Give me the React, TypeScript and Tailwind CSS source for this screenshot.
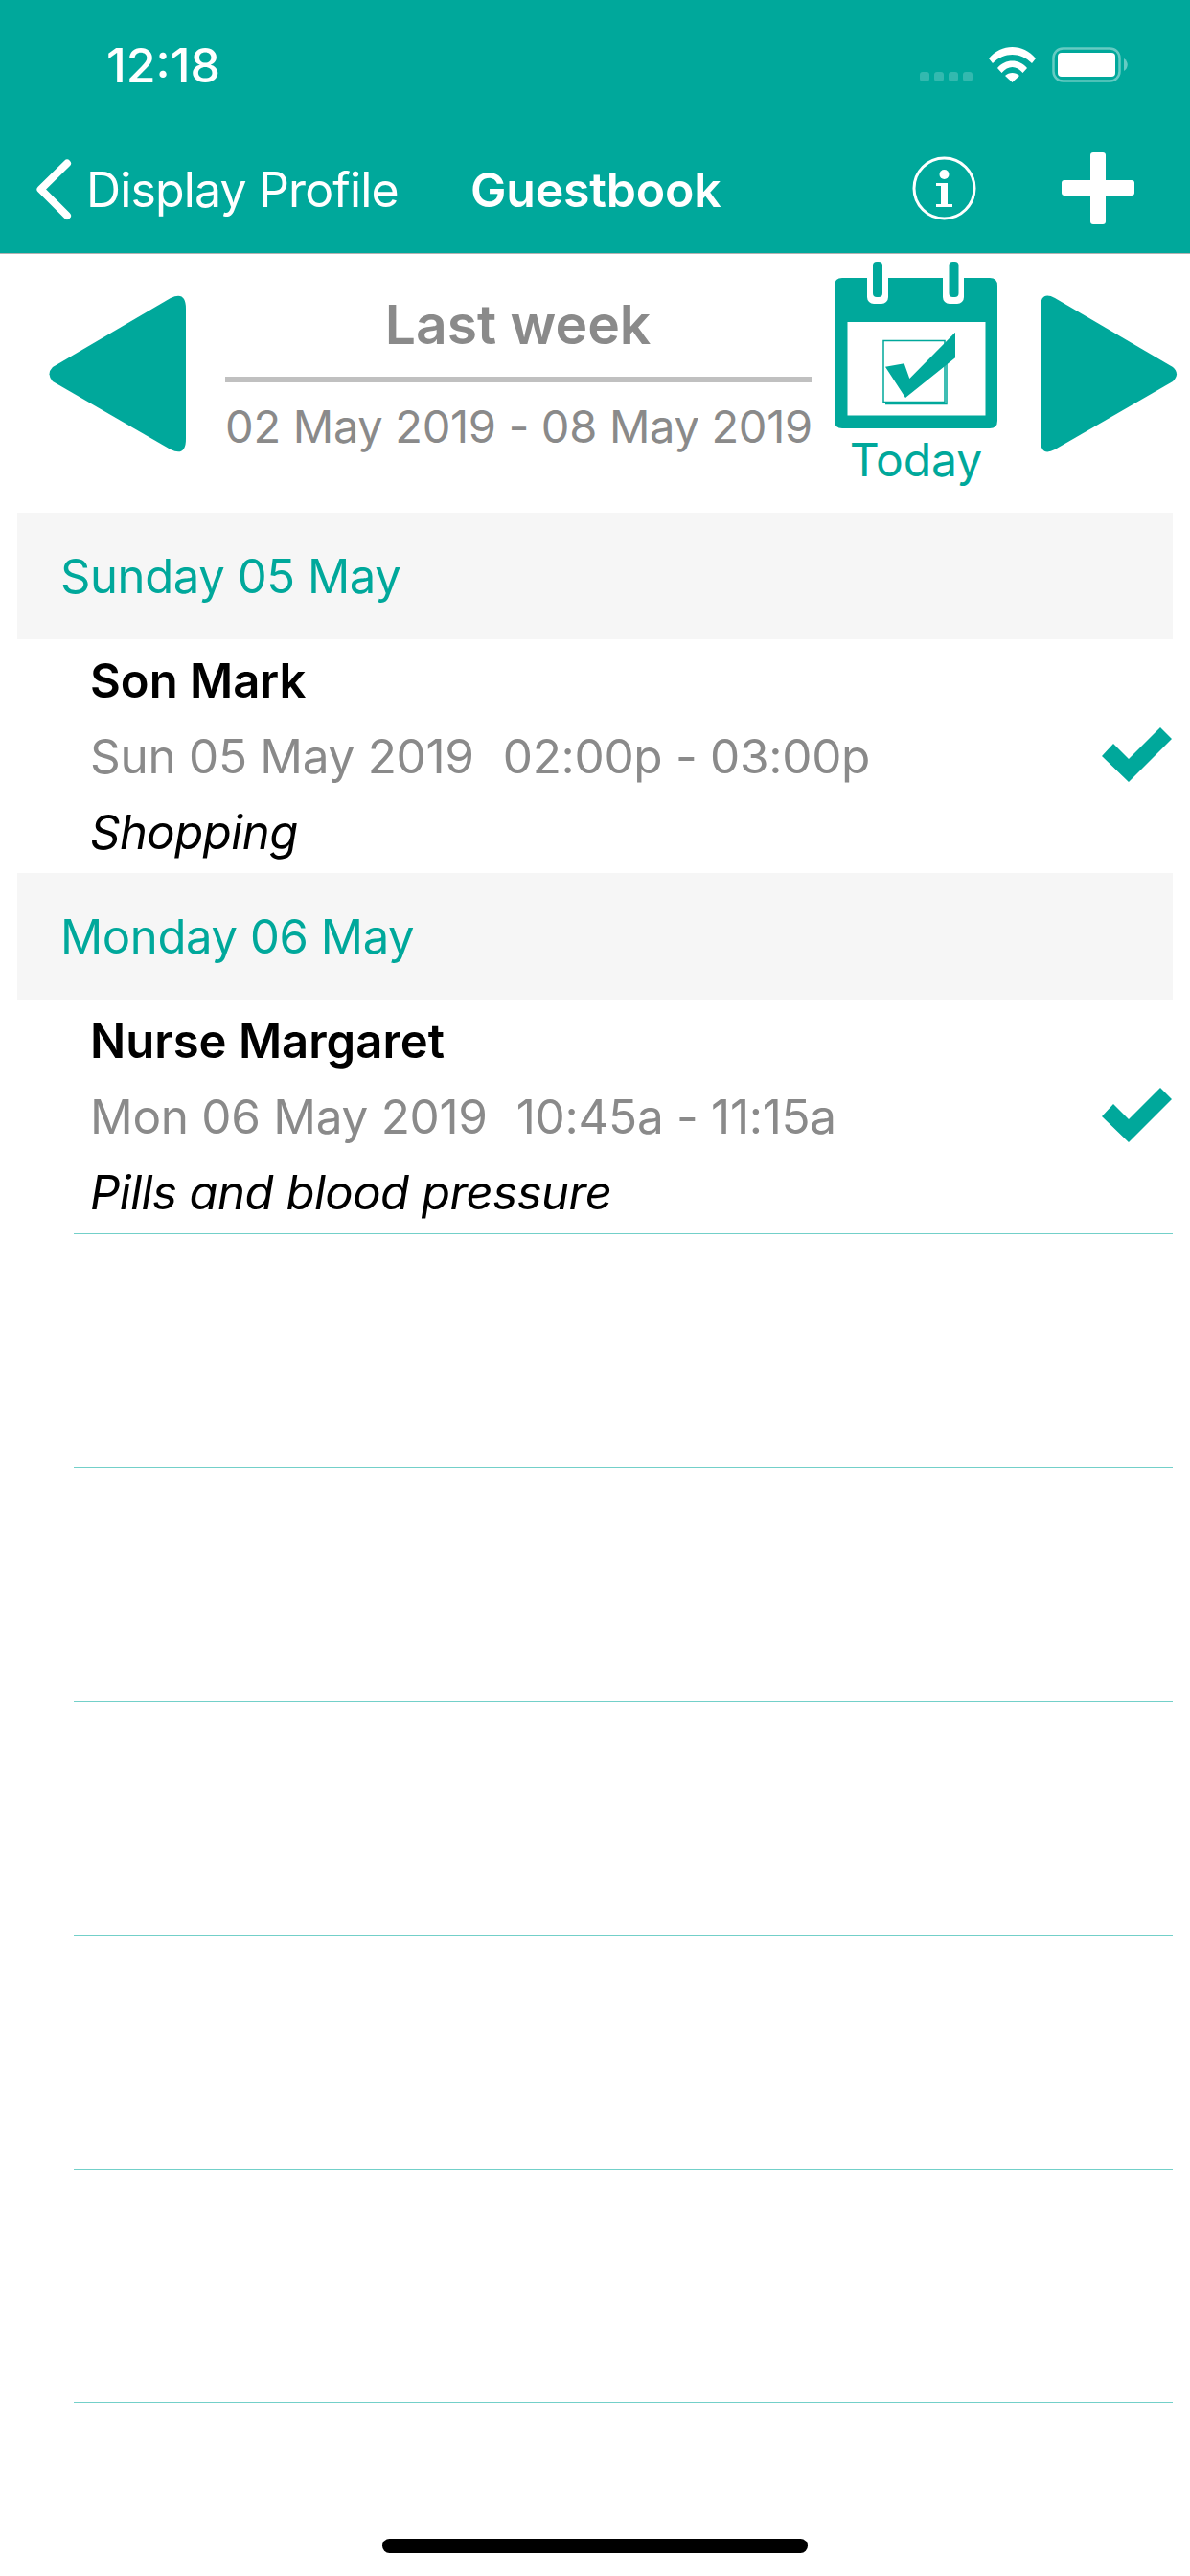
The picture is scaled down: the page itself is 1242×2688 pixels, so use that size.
const TEAL = '#00a89b';

const days = [
  {
    heading: 'Sunday 05 May',
    name: 'Son Mark',
    date: 'Sun 05 May 2019',
    time: '02:00p - 03:00p',
    note: 'Shopping',
  },
  {
    heading: 'Monday 06 May',
    name: 'Nurse Margaret',
    date: 'Mon 06 May 2019',
    time: '10:45a - 11:15a',
    note: 'Pills and blood pressure',
  },
];

const StatusBar = () => (
  <div className="flex h-[132px] items-start text-white">
    <span className="ml-[111px] mt-[41px] text-[50px] leading-[54px] font-medium">12:18</span>
    <div className="ml-auto mr-[17px] mt-[75px] flex gap-[5px]">
      {[0, 1, 2, 3].map((i) => (
        <span key={i} className="h-[10px] w-[10px] rounded-[3px] bg-white/20" />
      ))}
    </div>
    <svg className="mt-[49px]" width="49" height="37" viewBox="0 0 49 37" fill="white">
      <path d="M0 12 C13 -4 36 -4 49 12 L45 17 C33 5 16 5 4 17 Z" />
      <path d="M9 22 C17 12 32 12 40 22 L35.500 27 C29 19 20 19 13.500 27 Z" />
      <path d="M17 30 C21 26 28 26 32 30 L24.500 37 Z" />
    </svg>
    <svg className="ml-[17px] mr-[65px] mt-[49px]" width="79" height="37" viewBox="0 0 79 37">
      <rect x="1.500" y="1.500" width="69" height="34" rx="10" fill="none" stroke="white" strokeOpacity="0.4" strokeWidth="2.500" />
      <rect x="6" y="6" width="60" height="25" rx="4" fill="white" />
      <path d="M75 12 C80 15 80 22 75 25 Z" fill="white" fillOpacity="0.4" />
    </svg>
  </div>
);

const NavBar = () => (
  <div className="flex h-[132px] items-start text-white">
    <svg className="ml-[38px] mt-[34px]" width="37" height="64" viewBox="0 0 37 64" fill="none" stroke="white" strokeWidth="8" strokeLinecap="round" strokeLinejoin="round">
      <path d="M32 4.500 L4.500 31.500 L32 59" />
    </svg>
    <span className="ml-[15px] mt-[36px] w-[401px] text-[50px] leading-[60px] font-normal tracking-[-0.85px]">Display Profile</span>
    <span className="mt-[36px] text-[50px] leading-[60px] font-semibold tracking-[-0.2px]">Guestbook</span>
    <svg className="ml-auto mt-[31px]" width="67" height="67" viewBox="0 0 67 67" fill="white">
      <circle cx="33.500" cy="33.500" r="31.500" fill="none" stroke="white" strokeWidth="3" />
      <circle cx="33.500" cy="19" r="5" />
      <path d="M25 28 H37 V50 H42 V53 H25 V50 H30 V31 H25 Z" />
    </svg>
    <svg className="ml-[89px] mr-[58px] mt-[27px]" width="76" height="75" viewBox="0 0 76 75" fill="white">
      <rect x="30" y="0" width="16" height="75" rx="3" />
      <rect x="0" y="29" width="76" height="16" rx="3" />
    </svg>
  </div>
);

const ArrowLeft = () => (
  <svg width="146" height="164" viewBox="0 0 146 164" fill={TEAL}>
    <path d="M128 3 Q144 -5 144 14 L144 150 Q144 169 128 161 L5 90 Q-2 82 5 75 Z" />
  </svg>
);

const ArrowRight = () => (
  <svg width="146" height="164" viewBox="0 0 146 164" fill={TEAL}>
    <path d="M16 3 Q1 -5 1 13 L1 151 Q1 169 16 161 L139 90 Q147 82 139 75 Z" />
  </svg>
);

const CalendarIcon = () => (
  <svg width="170" height="178" viewBox="0 0 170 178">
    <path
      fillRule="evenodd"
      fill={TEAL}
      d="M8 20 H162 Q170 20 170 28 V169 Q170 177 162 177 H8 Q0 177 0 169 V28 Q0 20 8 20 Z M13.500 66 V163.500 H157.500 V66 Z"
    />
    <rect x="34" y="10" width="22" height="37" rx="7" fill="white" />
    <rect x="113" y="10" width="22" height="37" rx="7" fill="white" />
    <rect x="40" y="3" width="10" height="37" rx="4" fill={TEAL} />
    <rect x="119.500" y="3" width="10" height="37" rx="4" fill={TEAL} />
    <rect x="51" y="85.500" width="64" height="64" fill="none" stroke={TEAL} strokeWidth="1.500" />
    <path d="M117 100 V151.500 H53" fill="none" stroke={TEAL} strokeWidth="1.500" />
    <path d="M53 112.700 L72.700 109.300 L78.300 125 L126 76.700 V103.300 L74 145 Z" fill={TEAL} />
  </svg>
);

const Toolbar = () => (
  <div className="flex h-[270px] items-start">
    <div className="ml-[50px] mt-[43px]">
      <ArrowLeft />
    </div>
    <div className="ml-[39px] flex w-[613px] flex-col">
      <span className="mt-[41px] pr-[2px] text-center text-[57px] leading-[66px] font-semibold text-[#8a8a8a]">Last week</span>
      <div className="mt-[21px] h-[6px] bg-[#c0c0c0]" />
      <span className="mt-[17px] text-center text-[47px] leading-[58px] font-normal tracking-[-0.3px] text-[#8a8a8a]">02 May 2019 - 08 May 2019</span>
    </div>
    <div className="ml-[23px] mt-[5px] flex w-[170px] flex-col items-center">
      <CalendarIcon />
      <span className="mt-[3px] text-[48px] leading-[58px] text-[#00a89b]">Today</span>
    </div>
    <div className="ml-[44px] mt-[43px]">
      <ArrowRight />
    </div>
  </div>
);

const DayRow = ({ day }: { day: (typeof days)[number] }) => (
  <div>
    <div className="mx-[18px] flex h-[132px] items-center bg-[#f6f6f6] pl-[45px] pt-[2px] text-[49px] font-normal tracking-[-0.4px] text-[#00a89b]">
      {day.heading}
    </div>
    <div className="relative flex h-[244px] flex-col pl-[94px] pt-[4px]">
      <span className="text-[49px] leading-[79px] font-semibold text-black">{day.name}</span>
      <span className="text-[49.500px] leading-[79px] font-normal tracking-[-0.3px] text-[#8a8a8a]">
        {day.date}
        <span className="ml-[30px]">{day.time}</span>
      </span>
      <span className="text-[49px] leading-[79px] font-normal italic tracking-[-0.5px] text-black">{day.note}</span>
      <svg className="absolute left-[1150px] top-[92px]" width="74" height="58" viewBox="0 0 74 58" fill={TEAL}>
        <path d="M0 30 L12 17 L28 33 L61 0 L73 12 L28 57 Z" />
      </svg>
    </div>
  </div>
);

const App = () => (
  <div className="relative flex h-[2688px] w-[1242px] flex-col overflow-hidden bg-white font-['Inter',sans-serif]">
    <div className="border-b border-[#b2b2b2] bg-[#00a89b]">
      <StatusBar />
      <NavBar />
    </div>
    <Toolbar />
    <DayRow day={days[0]} />
    <DayRow day={days[1]} />
    <div className="ml-[77px] mr-[18px] flex flex-col">
      <div className="h-[244px] border-t border-[#73d0c9]" />
      <div className="h-[244px] border-t border-[#73d0c9]" />
      <div className="h-[244px] border-t border-[#73d0c9]" />
      <div className="h-[244px] border-t border-[#73d0c9]" />
      <div className="h-[243px] border-t border-[#73d0c9]" />
      <div className="border-t border-[#73d0c9]" />
    </div>
    <div className="absolute left-[399px] top-[2649px] h-[15px] w-[444px] rounded-full bg-black" />
  </div>
);

export default App;
